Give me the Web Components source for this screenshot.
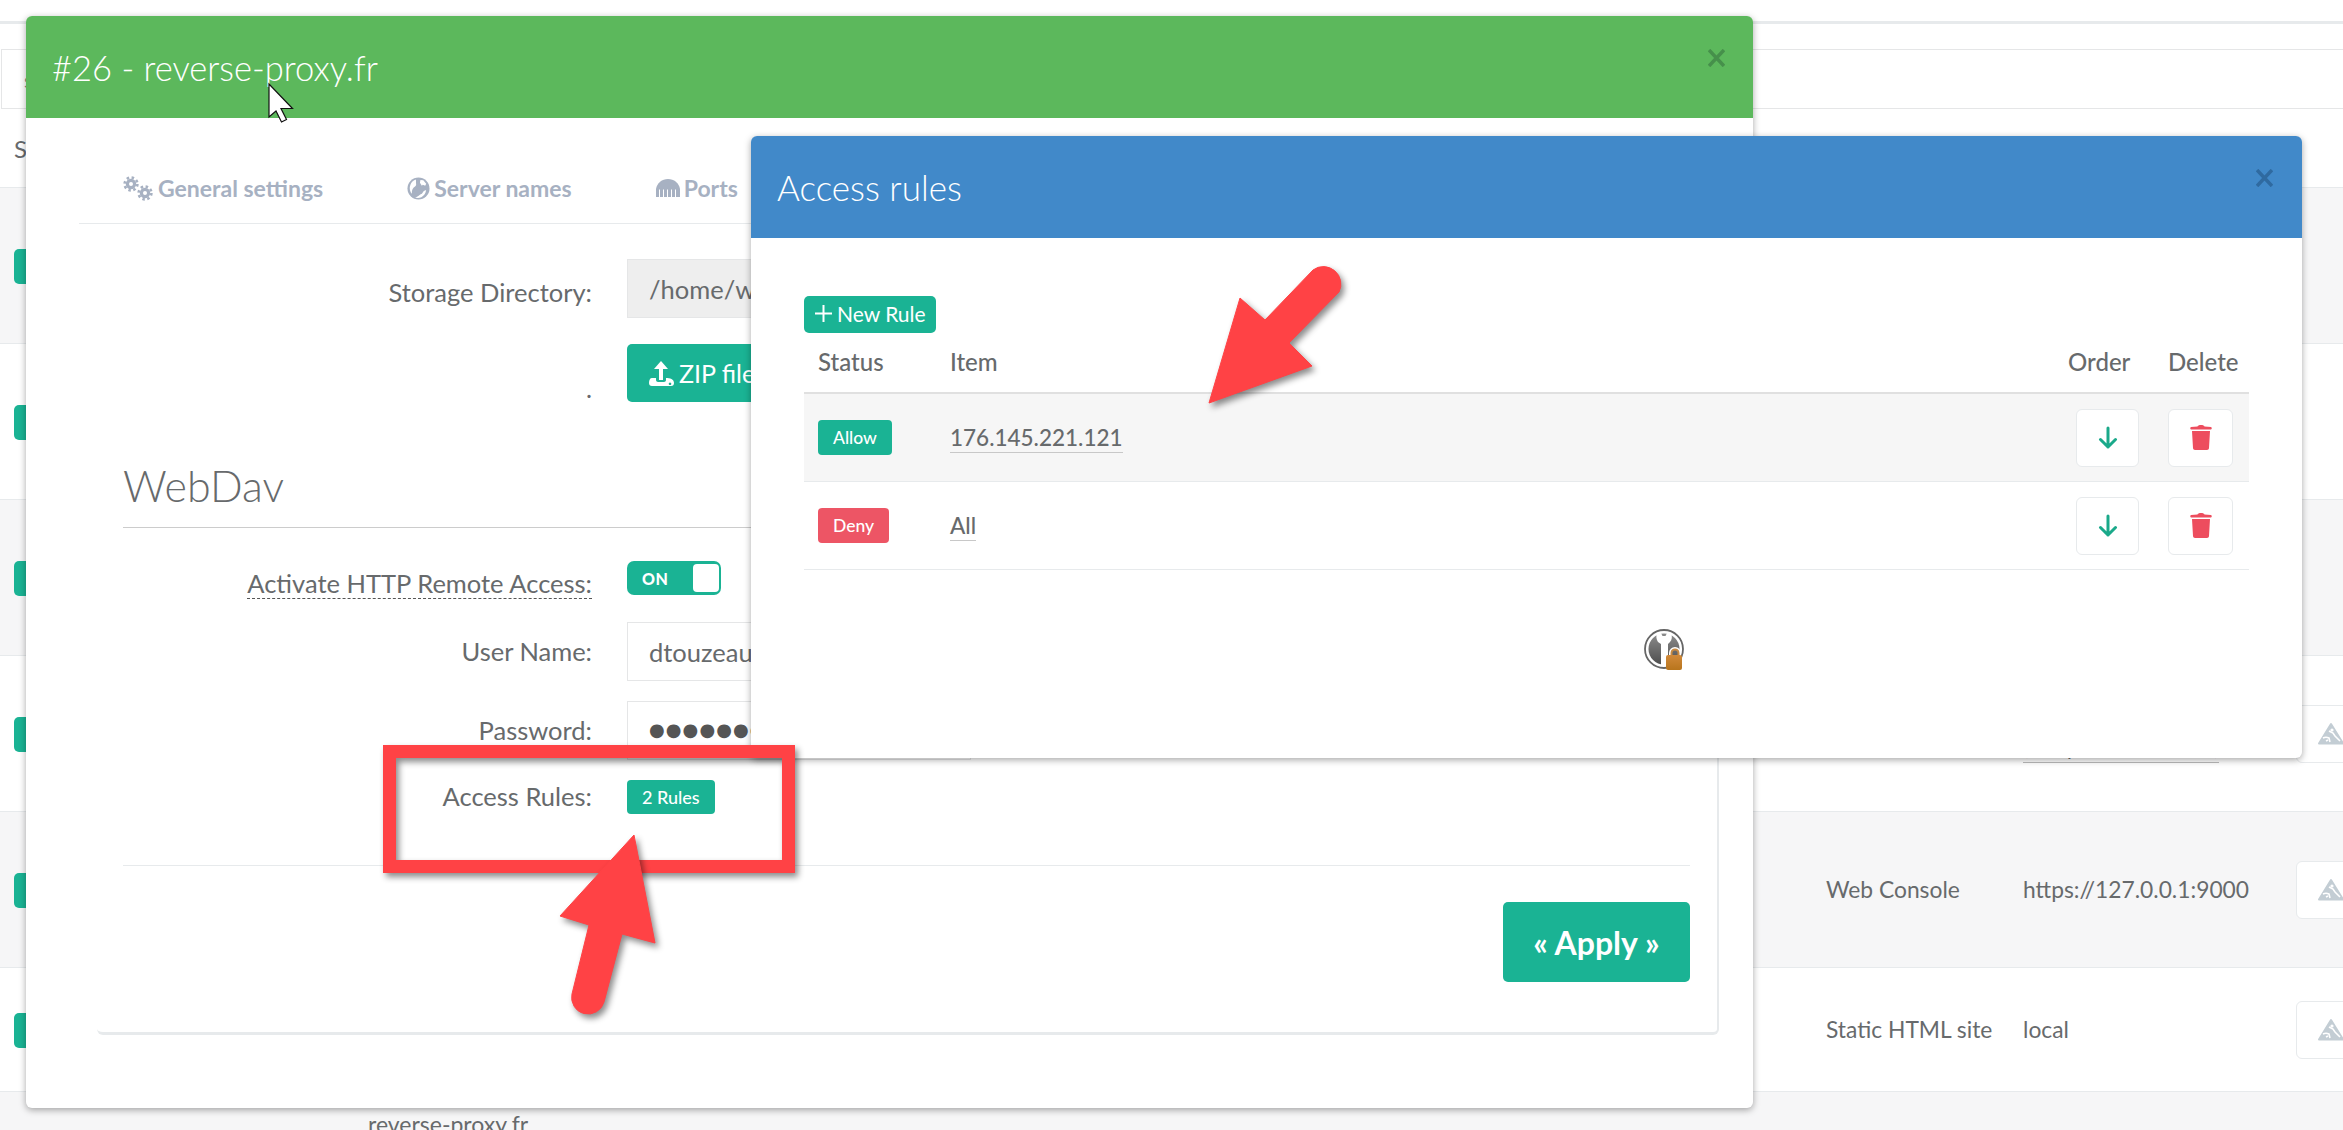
<!DOCTYPE html>
<html lang="en">
<head>
<meta charset="utf-8">
<title>reverse-proxy.fr</title>
<style>
  html, body { margin: 0; padding: 0; height: 1130px; overflow: hidden; background: #fff; }
  body { position: relative; font-family: Lato, "Open Sans", "Liberation Sans", sans-serif; color: #676a6c; }
</style>
</head>
<body>
<bg-page></bg-page>

<modal-window color="#5cb85c" style="left:26px;top:16px;width:1727px;height:1092px;--close-right:28px;--close-color:#46904b;--title-size:34.500px">
  <span slot="title">#26 - reverse-proxy.fr</span>
  <server-form></server-form>
</modal-window>

<modal-window color="#4189c9" style="left:751px;top:136px;width:1551px;height:622px;--close-right:29px;--close-color:#2f6aa0;--title-size:35px">
  <span slot="title">Access rules</span>
  <rules-table></rules-table>
</modal-window>

<mark-layer></mark-layer>

<script>
const ICONS = {
  gears: `<svg viewBox="0 0 30 25" width="30" height="25" fill="none" stroke="currentColor">
      <circle cx="8" cy="8" r="3.6" stroke-width="3.2"/><circle cx="8" cy="8" r="6.4" stroke-width="2.6" stroke-dasharray="2.5 2.5"/>
      <circle cx="22" cy="17" r="3.6" stroke-width="3.2"/><circle cx="22" cy="17" r="6.4" stroke-width="2.6" stroke-dasharray="2.5 2.5"/></svg>`,
  globe: `<svg viewBox="0 0 24 24" width="23" height="23"><circle cx="12" cy="12" r="11.5" fill="currentColor"/>
      <path fill="#fff" d="M9 2.500C5 4 2.500 8 3 13c.4 2 1 3.500 2 4.500 0-3 .5-5 2-6.500 1.500-1 3-2 2.500-4C9 5.500 10 4 9 2.500zM14 3l3 .5 3 3.500-1 2-2.500-1-1 1-2-3zM8.500 21.500c3-1 4.500-3 7-4l2-3 2.500-1c-.5 3-2 6-5 7.500-2 1-4.500 1-6.500.5z"/></svg>`,
  ports: `<svg viewBox="0 0 24 18" width="24" height="18"><path fill="currentColor" d="M0 18V10C1 4 6 0 12 0s11 4 12 10v8z"/>
      <path stroke="#fff" stroke-width="1" d="M3.500 10.500V18M7.500 10.500V18M11.500 10.500V18M15.500 10.500V18M19.500 10.500V18"/></svg>`,
  upload: `<svg viewBox="0 0 25 25" width="25" height="25" fill="#fff"><path d="M12 0l7 8h-5v11h-4V8H5z"/>
      <path fill-rule="evenodd" d="M3 17h4v2c0 1 1 2 2 2h6c1 0 2-1 2-2v-2h0c4 0 8 1 8 5 0 2-1 3-3 3H3c-2 0-3-1-3-3 0-3 1-5 3-5zm18 4.500a1.300 1.300 0 1 0 .01 0z"/></svg>`,
  plus: `<svg viewBox="0 0 17 17" width="17" height="17"><path stroke="#fff" stroke-width="2" d="M8.500 0v17M0 8.500h17"/></svg>`,
  down: `<svg viewBox="0 0 20 23" width="20" height="23" fill="none" stroke="#1aa98a" stroke-width="3" stroke-linecap="round" stroke-linejoin="round"><path d="M10 2v19M2.500 13.500L10 21l7.500-7.500"/></svg>`,
  trash: `<svg viewBox="0 0 22 25" width="22" height="25" fill="#ed4d5e"><path d="M7.500 1.500C8 .5 9 0 11 0s3 .5 3.500 1.500l6.500.5c1 0 1 2.500 0 2.500H1C0 4.500 0 2 1 2z"/><path d="M2 6h18l-1 17c0 1-1 2-2 2H5c-1 0-2-1-2-2z"/></svg>`,
  peak: `<svg viewBox="0 0 26 23" width="26" height="23"><path fill="#c3cdd4" stroke="#c3cdd4" stroke-width="2" stroke-linejoin="round" d="M13 2L25 21.500H1z"/>
      <path fill="none" stroke="#fff" stroke-width="1.600" d="M11 9l4 2 2 3 5 5M5 16c2-1 4-1 6 0l1 4M8 19l2-1"/><circle cx="14" cy="8" r="1.600" fill="#fff"/></svg>`,
  close: `<svg viewBox="0 0 17 18" width="17" height="18" stroke="currentColor" stroke-width="3.500"><path d="M1 1l15 16M16 1L1 17"/></svg>`,
  logo: `<svg viewBox="0 0 42 42" width="42" height="42">
      <defs>
        <linearGradient id="disc" x1="0" y1="0" x2="0" y2="1"><stop offset="0" stop-color="#8c8c8c"/><stop offset="1" stop-color="#4e4e4e"/></linearGradient>
        <linearGradient id="lockfill" x1="0" y1="0" x2="0" y2="1"><stop offset="0" stop-color="#d1893a"/><stop offset="1" stop-color="#b8751c"/></linearGradient>
      </defs>
      <circle cx="20" cy="20" r="19" fill="#fff" stroke="#666" stroke-width="1.800"/>
      <circle cx="20" cy="20" r="15.500" fill="url(#disc)"/>
      <path fill="#fff" d="M13 4h4l1.500 3h3L23 4h4c1.500 3 1 7-1 9l-2 2v21h-7V15l-3-2c-2-3-2-6-1-9z"/>
      <path fill="none" stroke="#fff" stroke-width="2" d="M26 29v-5a5 5 0 0 1 10 0v5"/>
      <path fill="none" stroke="#c98a42" stroke-width="2" d="M27.500 29v-5a3.500 3.500 0 0 1 7 0v5"/>
      <rect x="22" y="26" width="16" height="15" rx="2" fill="url(#lockfill)"/>
    </svg>`
};

class UiIcon extends HTMLElement {
  connectedCallback() {
    const root = this.attachShadow({mode: "open"});
    root.innerHTML = `
      <style>
        :host { display: inline-flex; line-height: 0; flex: none; }
      </style>
      ${ICONS[this.getAttribute("name")]}`;
  }
}
customElements.define("ui-icon", UiIcon);

class BgRow extends HTMLElement {
  constructor() {
    super();
    this.attachShadow({mode: "open"}).innerHTML = `
      <style>
        :host {
          display: grid;
          grid-template-columns: 1826px 197px 273px 47px;
          align-items: center;
          height: 155px;
          border-bottom: 1px solid #e7eaec;
          background: #fff;
          font-size: 22.800px;
        }
        :host([striped]) { background: #f6f6f7; }
        .badge {
          width: 80px; height: 35px; margin: 2px 0 0 14px;
          background: #1ab394; border-radius: 5px;
        }
        .btn {
          display: flex; align-items: center;
          width: 70px; height: 58px; padding-left: 21px; box-sizing: border-box;
          background: #fff; border: 1px solid #e7eaec; border-radius: 6px;
        }
        ::slotted(span) { padding-bottom: 2px; }
        ::slotted(.low) { align-self: end; margin-bottom: 48px; padding-bottom: 0; border-bottom: 1px solid #bbb; justify-self: start; line-height: 30px; font-size: 21px; }
      </style>
      <div class="badge"></div>
      <slot></slot>
      <div class="btn"><ui-icon name="peak"></ui-icon></div>`;
  }
}
customElements.define("bg-row", BgRow);

class BgPage extends HTMLElement {
  constructor() {
    super();
    this.attachShadow({mode: "open"}).innerHTML = `
      <style>
        :host { display: block; height: 1130px; overflow: hidden; background: #f6f6f7; font-size: 23px; }
        .head { background: #fff; padding-top: 21px; }
        .top { height: 23px; border-top: 3px solid #e7eaec; box-sizing: border-box; margin-bottom: 5px; }
        .search {
          height: 60px; box-sizing: border-box; margin-left: 1px; padding-left: 22px;
          display: flex; align-items: center;
          border: 1px solid #e5e6e7; border-right: 0; color: #8a8a8a; font-size: 22px;
        }
        .cols { height: 79px; display: flex; align-items: center; padding: 0 0 0 14px; font-weight: 400; font-size: 24px; border-bottom: 1px solid #e7eaec; box-sizing: border-box; }
        .tail { padding: 17px 0 0 368px; line-height: 30px; }
      </style>
      <div class="head">
        <div class="top"></div>
        <div class="search">search</div>
        <div class="cols">Status</div>
      </div>
      <bg-row striped></bg-row>
      <bg-row></bg-row>
      <bg-row striped></bg-row>
      <bg-row><span></span><span class="low">(computal.webserver)</span></bg-row>
      <bg-row striped><span>Web Console</span><span>https://127.0.0.1:9000</span></bg-row>
      <bg-row style="height:123px"><span>Static HTML site</span><span>local</span></bg-row>
      <div class="tail">reverse-proxy.fr</div>`;
  }
}
customElements.define("bg-page", BgPage);

class ModalWindow extends HTMLElement {
  constructor() {
    super();
    this.attachShadow({mode: "open"});
  }
  connectedCallback() {
    const color = this.getAttribute("color");
    this.shadowRoot.innerHTML = `
      <style>
        :host {
          position: absolute;
          display: flex; flex-direction: column;
          background: #fff;
          border-radius: 6px;
          box-shadow: 0 2px 7px rgba(0,0,0,.35);
          overflow: hidden;
        }
        header {
          flex: none; height: 102px; box-sizing: border-box;
          display: flex; align-items: center; justify-content: space-between;
          padding: 0 var(--close-right) 0 26px;
          background: ${color}; color: #fff;
          font-weight: 300; font-size: var(--title-size);
        }
        .close { color: var(--close-color); margin-bottom: 18px; }
        main { flex: 1; min-height: 0; }
      </style>
      <header><slot name="title"></slot><ui-icon class="close" name="close"></ui-icon></header>
      <main><slot></slot></main>`;
  }
}
customElements.define("modal-window", ModalWindow);

class FormRow extends HTMLElement {
  constructor() {
    super();
    this.attachShadow({mode: "open"}).innerHTML = `
      <style>
        :host {
          display: grid; grid-template-columns: 469px 1fr; column-gap: 35px; align-items: center;
          font-size: 25.500px;
        }
        .lab { text-align: right; padding-bottom: 2px; }
      </style>
      <div class="lab"><slot name="label"></slot></div>
      <div><slot></slot></div>`;
  }
}
customElements.define("form-row", FormRow);

class ServerForm extends HTMLElement {
  constructor() {
    super();
    this.attachShadow({mode: "open"}).innerHTML = `
      <style>
        :host { display: block; }
        .tabs {
          height: 106px; box-sizing: border-box; margin-left: 53px; padding: 0 0 20px 44px;
          display: flex; align-items: flex-end; gap: 84px;
          border-bottom: 1px solid #e7eaec;
          color: #a7b1c2; font-size: 23px; font-weight: 700;
        }
        .tab { display: flex; align-items: center; gap: 5px; white-space: nowrap; height: 30px; }
        .tab ui-icon { color: #a7b1c2; }
        .tab ui-icon[name="globe"], .tab ui-icon[name="ports"] { margin-right: -1px; }
        .panel {
          margin-left: 71px; width: 1622px; height: 811px; box-sizing: border-box;
          padding: 35px 27px 0 26px;
          border-right: 2px solid #e7eaec; border-bottom: 3px solid #e7eaec;
          border-bottom-left-radius: 6px; border-bottom-right-radius: 6px;
        }
        .input {
          width: 344px; height: 59px; box-sizing: border-box; padding-left: 21px;
          display: flex; align-items: center; white-space: nowrap; overflow: hidden;
          border: 1px solid #e5e6e7; font-size: 25.500px; color: #676a6c;
        }
        .input.ro { background: #eee; width: 700px; }
        .btn {
          display: inline-flex; align-items: center; gap: 5px;
          background: #1ab394; color: #fff; border-radius: 5px;
        }
        .zip { height: 58px; padding: 0 22px; font-size: 25px; }
        h2 {
          margin: 0; height: 126px; box-sizing: border-box; padding-top: 60px;
          font-weight: 300; font-size: 43px; line-height: 48px; color: #676a6c;
          border-bottom: 1px solid #ccc;
        }
        .toggle {
          width: 94px; height: 34px; box-sizing: border-box; padding: 3px 2px 3px 15px;
          display: flex; justify-content: space-between; align-items: center;
          background: #1ab394; border-radius: 7px;
          color: #fff; font-size: 16px; font-weight: 900; letter-spacing: .5px;
        }
        .knob { width: 26px; height: 28px; background: #fff; border-radius: 4px; }
        .dash { border-bottom: 1px dashed #555; }
        .dots { font-family: "DejaVu Sans", sans-serif; font-size: 18px; letter-spacing: 1.100px; color: #555; padding-bottom: 2px; }
        .rules { display: inline-flex; align-items: center; height: 34px; padding: 0 15px; background: #1ab394; color: #fff; border-radius: 4px; font-size: 18px; font-weight: 500; }
        .rule { margin-top: 51px; border-top: 1px solid #e7eaec; padding-top: 36px; display: flex; justify-content: flex-end; }
        .apply { height: 80px; padding: 0 30.500px; font-size: 32px; font-weight: 700; }
      </style>
      <div class="tabs">
        <div class="tab"><ui-icon name="gears"></ui-icon>General settings</div>
        <div class="tab"><ui-icon name="globe"></ui-icon>Server names</div>
        <div class="tab"><ui-icon name="ports"></ui-icon>Ports</div>
      </div>
      <div class="panel">
        <form-row><span slot="label" style="display:block;padding-top:8px">Storage Directory:</span><div class="input ro">/home/www/reverse-proxy.fr</div></form-row>
        <form-row style="margin-top:26px"><span slot="label" style="position:relative;top:16px">.</span><div class="btn zip"><ui-icon name="upload"></ui-icon>ZIP file</div></form-row>
        <h2>WebDav</h2>
        <form-row style="margin-top:33px"><span slot="label" class="dash" style="position:relative;top:6px">Activate HTTP Remote Access:</span><div class="toggle">ON<div class="knob"></div></div></form-row>
        <form-row style="margin-top:27px"><span slot="label">User Name:</span><div class="input">dtouzeau</div></form-row>
        <form-row style="margin-top:20px"><span slot="label">Password:</span><div class="input dots">●●●●●●●●●●●●●●●●●●</div></form-row>
        <form-row style="margin-top:19px"><span slot="label">Access Rules:</span><div class="rules">2 Rules</div></form-row>
        <div class="rule"><div class="btn apply">« Apply »</div></div>
      </div>`;
  }
}
customElements.define("server-form", ServerForm);

class RuleRow extends HTMLElement {
  constructor() {
    super();
    this.attachShadow({mode: "open"});
  }
  connectedCallback() {
    const kind = this.getAttribute("kind");
    this.shadowRoot.innerHTML = `
      <style>
        :host {
          display: grid; grid-template-columns: 132px 1fr 100px 95px; align-items: center;
          height: 87px; border-bottom: 1px solid #e7eaec;
          font-size: 22.500px; font-weight: 500;
        }
        :host([striped]) { background: #f6f6f6; }
        .lab {
          justify-self: start; margin-left: 14px; height: 35px; padding: 0 15px;
          display: flex; align-items: center; border-radius: 4px;
          color: #fff; font-size: 17.500px; font-weight: 500;
          background: ${kind === "Allow" ? "#1ab394" : "#ed5565"};
        }
        .item { justify-self: start; margin-left: 14px; line-height: 26px; padding-bottom: 1px; border-bottom: 1px solid #c8c8c8; }
        .btn {
          height: 58px; box-sizing: border-box; background: #fff;
          border: 1px solid #e7eaec; border-radius: 6px;
          display: flex; align-items: center; justify-content: center;
        }
        .o { width: 63px; margin-left: 22px; }
        .d { width: 65px; margin-left: 14px; }
      </style>
      <div class="lab">${kind}</div>
      <div><span class="item"><slot></slot></span></div>
      <div class="btn o"><ui-icon name="down"></ui-icon></div>
      <div class="btn d"><ui-icon name="trash"></ui-icon></div>`;
  }
}
customElements.define("rule-row", RuleRow);

class RulesTable extends HTMLElement {
  constructor() {
    super();
    this.attachShadow({mode: "open"}).innerHTML = `
      <style>
        :host { display: block; padding: 58px 53px 0; }
        .new {
          display: inline-flex; align-items: center; gap: 5px;
          height: 37px; padding: 0 10px 2px 11px; box-sizing: border-box;
          background: #1ab394; color: #fff; border-radius: 5px; font-size: 21px;
          vertical-align: top;
        }
        .top { height: 37px; }
        .cols {
          display: grid; grid-template-columns: 132px 1fr 100px 95px; align-items: center;
          height: 61px; padding-bottom: 2px; box-sizing: border-box; border-bottom: 2px solid #e0e0e0;
          font-size: 24px; font-weight: 500;
        }
        .cols span { padding-left: 14px; }
        .logo { display: flex; padding: 59px 0 0 840px; }
      </style>
      <div class="top"><div class="new"><ui-icon name="plus"></ui-icon>New Rule</div></div>
      <div class="cols"><span>Status</span><span>Item</span><span>Order</span><span>Delete</span></div>
      <rule-row kind="Allow" striped>176.145.221.121</rule-row>
      <rule-row kind="Deny">All</rule-row>
      <div class="logo"><ui-icon name="logo"></ui-icon></div>`;
  }
}
customElements.define("rules-table", RulesTable);

// annotations and mouse pointer, drawn over the whole screenshot
class MarkLayer extends HTMLElement {
  constructor() {
    super();
    this.attachShadow({mode: "open"}).innerHTML = `
      <style>
        :host { position: absolute; left: 0; top: 0; width: 2343px; height: 1130px; pointer-events: none; }
        svg { display: block; }
        .red { filter: drop-shadow(3px 4px 3px rgba(0,0,0,.45)); }
      </style>
      <svg width="2343" height="1130" viewBox="0 0 2343 1130">
        <rect class="red" x="389.500" y="751.500" width="399" height="115" fill="none" stroke="#ff4245" stroke-width="13"/>
        <path class="red" fill="#ff4245" stroke="#ff4245" stroke-width="1" stroke-linejoin="round"
          d="M634 835 L655 943 L622 934 L604 1002 A16.500 16.500 0 0 1 572 994 L589 925 L560 916 Z"/>
        <path class="red" fill="#ff4245" stroke="#ff4245" stroke-width="1" stroke-linejoin="round"
          d="M1209 403 L1240 298 L1265 320 L1313 270 A17.500 17.500 0 0 1 1339 292 L1289 343 L1312 366 Z"/>
        <path fill="#fff" stroke="#111" stroke-width="1.200" stroke-linejoin="miter"
          d="M269 84 L269 117 L276 111 L281.500 122 L286.500 119.500 L281 108.500 L292.500 108.500 Z"/>
      </svg>`;
  }
}
customElements.define("mark-layer", MarkLayer);
</script>
</body>
</html>
